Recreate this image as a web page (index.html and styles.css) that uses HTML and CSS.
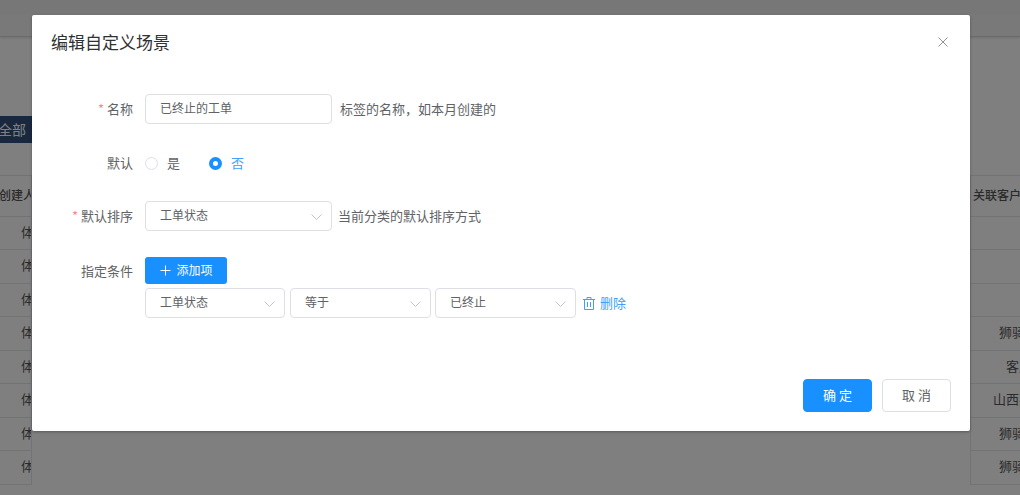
FILE: index.html
```html
<!DOCTYPE html>
<html lang="zh-CN">
<head>
<meta charset="utf-8">
<title>编辑自定义场景</title>
<link rel="stylesheet" href="styles.css">
</head>
<body>
<div class="page">
  <div class="topbar"></div>
  <div class="tag-row"><span class="tag">全部</span></div>
  <div class="table">
    <div class="tr th"><div class="cell-l"><span>创建人</span></div><div class="cell-r">关联客户</div></div>
    <div class="tr"><div class="cell-l">体</div><div class="cell-r"></div></div>
    <div class="tr"><div class="cell-l">体</div><div class="cell-r"></div></div>
    <div class="tr"><div class="cell-l">体</div><div class="cell-r"></div></div>
    <div class="tr"><div class="cell-l">体</div><div class="cell-r">狮骑科技</div></div>
    <div class="tr"><div class="cell-l">体</div><div class="cell-r">客户一</div></div>
    <div class="tr"><div class="cell-l">体</div><div class="cell-r">山西某公司</div></div>
    <div class="tr"><div class="cell-l">体</div><div class="cell-r">狮骑科技</div></div>
    <div class="tr"><div class="cell-l">体</div><div class="cell-r">狮骑科技</div></div>
  </div>
</div>
<div class="overlay"></div>
<div class="dialog">
  <div class="dialog-head">
    <span class="dialog-title">编辑自定义场景</span>
    <svg class="close" width="10" height="10" viewBox="0 0 10 10"><path d="M.5.5l9 9M9.500.5l-9 9" stroke="#909399" fill="none"/></svg>
  </div>
  <div class="form">
    <div class="row row-name">
      <label class="label"><i>*</i>名称</label>
      <div class="input w187">已终止的工单</div>
      <span class="hint">标签的名称<span class="punct">，</span>如本月创建的</span>
    </div>
    <div class="row row-default">
      <label class="label">默认</label>
      <span class="radio"><span class="dot"></span><span class="radio-text">是</span></span>
      <span class="radio on"><span class="dot"></span><span class="radio-text">否</span></span>
    </div>
    <div class="row row-sort">
      <label class="label"><i>*</i>默认排序</label>
      <div class="input select w187">工单状态<svg class="chev" width="11" height="6" viewBox="0 0 11 6"><path d="M.5.500l5 5 5-5" stroke="#c0c4cc" fill="none"/></svg></div>
      <span class="hint hint-tight">当前分类的默认排序方式</span>
    </div>
    <div class="row row-cond">
      <label class="label label-cond">指定条件</label>
      <div class="cond">
        <button class="add"><svg width="11" height="11" viewBox="0 0 11 11"><path d="M5.500.5v10M.5 5.500h10" stroke="#fff" fill="none"/></svg><span class="add-text">添加项</span></button>
        <div class="cond-line">
          <div class="input select w140">工单状态<svg class="chev" width="11" height="6" viewBox="0 0 11 6"><path d="M.5.500l5 5 5-5" stroke="#c0c4cc" fill="none"/></svg></div>
          <div class="input select w141">等于<svg class="chev" width="11" height="6" viewBox="0 0 11 6"><path d="M.5.500l5 5 5-5" stroke="#c0c4cc" fill="none"/></svg></div>
          <div class="input select w141">已终止<svg class="chev" width="11" height="6" viewBox="0 0 11 6"><path d="M.5.500l5 5 5-5" stroke="#c0c4cc" fill="none"/></svg></div>
          <span class="del"><svg width="12" height="13" viewBox="0 0 12 13"><path d="M0 2.500h12M4 2.500V.5h4v2M1.500 2.500v10h9v-10M4.500 5v5M7.500 5v5" stroke="#409eff" fill="none"/></svg><span class="del-text">删除</span></span>
        </div>
      </div>
    </div>
  </div>
  <div class="foot">
    <button class="btn primary">确 定</button>
    <button class="btn">取 消</button>
  </div>
</div>
</body>
</html>
```
FILE: styles.css
```css
* { box-sizing: border-box; }
html, body { margin: 0; height: 100%; overflow: hidden; }
body {
  width: 1020px;
  height: 495px;
  position: relative;
  background: #fff;
  font-family: "Noto Sans CJK SC", "Liberation Sans", sans-serif;
  font-size: 13px;
  color: #606266;
}
.topbar {
  height: 37px;
  background: #f2f2f2;
  border-top: 14px solid #eee;
  border-bottom: 1px solid #d6d6d6;
  box-shadow: 0 1px 2px rgba(0, 0, 0, .12);
}
.tag-row { height: 106px; padding-top: 79px; }
.tag {
  display: block;
  width: 33px;
  height: 27px;
  background: #34507f;
  color: #fff;
  font-size: 14px;
  line-height: 26px;
  text-indent: -2px;
  white-space: nowrap;
  overflow: hidden;
}
.table { margin-top: 32px; }
.tr {
  display: flex;
  justify-content: space-between;
  height: 33.5px;
}
.th { height: 41.5px; }
.cell-l, .cell-r {
  border-bottom: 1px solid #e4e7ed;
  line-height: 30px;
  color: #555;
  white-space: nowrap;
}
.cell-l {
  width: 32px;
  padding-left: 21px;
  border-right: 1px solid #e4e7ed;
  overflow: hidden;
}
.cell-r {
  width: 50px;
  border-left: 1px solid #e4e7ed;
}
.th .cell-l, .th .cell-r {
  border-top: 1px solid #e4e7ed;
  line-height: 37px;
  font-size: 12px;
  font-weight: 500;
  color: #555;
}
.th .cell-l { padding-left: 0; }
.th .cell-l span { margin-left: -1px; }
.tr:nth-child(5) .cell-r, .tr:nth-child(8) .cell-r, .tr:nth-child(9) .cell-r { padding-left: 28px; }
.tr:nth-child(6) .cell-r { padding-left: 35px; }
.tr:nth-child(7) .cell-r { padding-left: 22px; }
.th .cell-r { padding-left: 2px; }
.overlay {
  position: absolute;
  inset: 0;
  background: rgba(0, 0, 0, .5);
}
.dialog {
  position: absolute;
  left: 32px;
  top: 15px;
  width: 938px;
  height: 416px;
  background: #fff;
  border-radius: 2px;
  box-shadow: 0 1px 3px rgba(0, 0, 0, .3);
  display: flex;
  flex-direction: column;
}
.dialog-head {
  height: 54px;
  padding: 0 22px 2px 19px;
  display: flex;
  align-items: center;
  justify-content: space-between;
}
.dialog-title { font-size: 17px; color: #303133; }
.close { margin-top: 1px; }
.form { padding-top: 25px; }
.row { display: flex; align-items: center; }
.row-name { height: 30px; }
.row-default { height: 30px; margin-top: 24px; }
.row-sort { height: 30px; margin-top: 23px; }
.row-cond { align-items: flex-start; margin-top: 26px; }
.label {
  width: 101px;
  margin-right: 12px;
  padding-bottom: 2px;
  text-align: right;
  flex: none;
}
.label i { font-style: normal; color: #f78989; margin-right: 3px; }
.label-cond { line-height: 27px; }
.input {
  height: 30px;
  border: 1px solid #dcdfe6;
  border-radius: 4px;
  padding: 0 14px;
  font-size: 12px;
  line-height: 26px;
  flex: none;
}
.select { position: relative; }
.chev { position: absolute; right: 9px; top: 12px; }
.w187 { width: 187px; }
.w140 { width: 140px; }
.w141 { width: 141px; }
.hint { margin-left: 8px; padding-bottom: 2px; }
.hint-tight { margin-left: 6px; }
.punct { font-family: "Noto Sans CJK TC", sans-serif; }
.radio { display: flex; align-items: center; margin-right: 29px; }
.radio-text { padding-bottom: 2px; }
.dot {
  width: 13px;
  height: 13px;
  margin-right: 9px;
  border: 1px solid #dcdfe6;
  border-radius: 50%;
}
.on { color: #409eff; }
.on .dot { border: 4.500px solid #1890ff; background: #fff; }
.cond { display: flex; flex-direction: column; gap: 4px; }
.add {
  width: 82px;
  height: 27px;
  border: 0;
  border-radius: 3px;
  background: #1890ff;
  color: #fff;
  font: 12px "Noto Sans CJK SC", sans-serif;
  display: flex;
  align-items: center;
  justify-content: center;
  gap: 5px;
  padding: 0 0 0 1px;
}
.add-text { padding-bottom: 2px; }
.cond-line { display: flex; align-items: center; gap: 5px; }
.cond-line .w141:nth-child(3) { margin-left: -1px; }
.del { display: flex; align-items: center; gap: 5px; margin-left: 2px; color: #409eff; }
.del-text { padding-bottom: 2px; }
.foot {
  margin-top: auto;
  padding: 0 19px 19px 0;
  display: flex;
  justify-content: flex-end;
  gap: 10px;
}
.btn {
  width: 69px;
  height: 33px;
  padding: 0 0 2px;
  border: 1px solid #dcdfe6;
  border-radius: 4px;
  background: #fff;
  color: #606266;
  font: 13px "Noto Sans CJK SC", sans-serif;
}
.primary { background: #1890ff; border-color: #1890ff; color: #fff; }
```
